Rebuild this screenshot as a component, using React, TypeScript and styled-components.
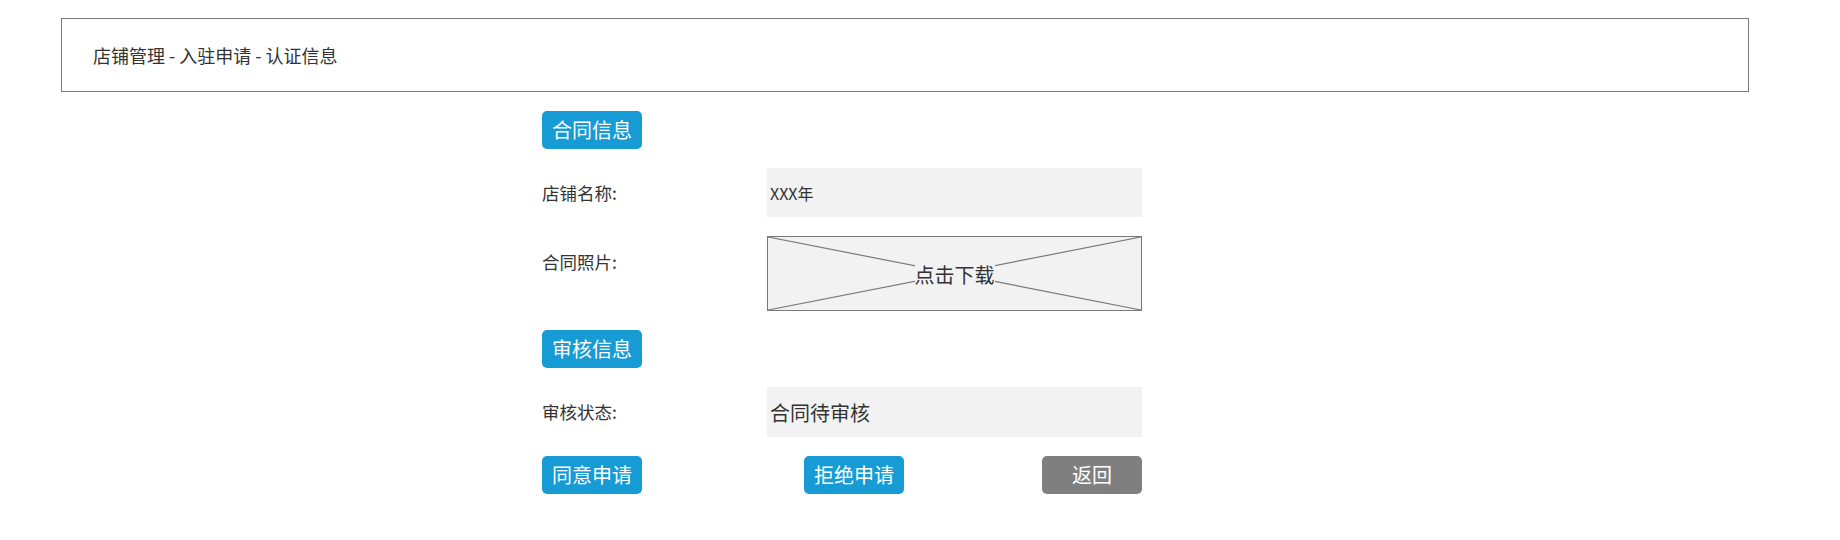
import React from 'react';
import styled, {createGlobalStyle} from 'styled-components';

const GlobalStyle = createGlobalStyle`
  * {
    box-sizing: border-box;
  }
  body {
    margin: 0;
    background: #fff;
    font-family: "Noto Sans CJK SC", "Liberation Sans", sans-serif;
    color: #333;
  }
`
const Page = styled.div`
  width: 1840px;
  padding: 18px 0 0 61px;
`
const Header = styled.div`
  width: 1688px;
  height: 74px;
  border: 1px solid #797979;
  display: flex;
  align-items: center;
  padding-left: 31px;
  font-size: 18px;
  color: #333;
`
const Content = styled.div`
  width: 601px;
  margin-left: 481px;
  margin-top: 19px;
  display: flex;
  flex-direction: column;
  gap: 19px;
`
const Button = styled.button<{ $gray?: boolean }>`
  display: block;
  width: 100px;
  height: 38px;
  border: none;
  border-radius: 5px;
  background: ${p => p.$gray ? '#7f7f7f' : '#169bd5'};
  color: #fff;
  font-family: inherit;
  font-size: 20px;
  line-height: 38px;
  padding: 0;
  cursor: pointer;
`
const Row = styled.div<{ $top?: boolean }>`
  display: grid;
  grid-template-columns: 225px 375px;
  align-items: ${p => p.$top ? 'start' : 'center'};
`
const Label = styled.div<{ $offset?: number }>`
  font-size: 17.5px;
  line-height: 24px;
  color: #333;
  padding-top: ${p => p.$offset || 0}px;
`
const Field = styled.div<{ $big?: boolean }>`
  height: ${p => p.$big ? 50 : 49}px;
  background: #f2f2f2;
  display: flex;
  align-items: center;
  padding-left: 3px;
  font-size: ${p => p.$big ? 20 : 16}px;
  color: #333;
`
const Placeholder = styled.div`
  position: relative;
  height: 75px;
  border: 1px solid #797979;
  background: #f2f2f2;
  display: flex;
  align-items: center;
  justify-content: center;
  cursor: pointer;
`
const Cross = styled.svg`
  position: absolute;
  inset: 0;
  width: 100%;
  height: 100%;
`
const PlaceholderText = styled.span`
  position: relative;
  background: #f2f2f2;
  font-size: 20px;
  line-height: 24px;
  margin-top: 3px;
  color: #333;
`
const Actions = styled.div`
  display: flex;
  align-items: center;
`
const Spacer = styled.div<{ $w?: number }>`
  width: ${p => p.$w}px;
`

const App = () => {
    return (
        <>
            <GlobalStyle/>
            <Page>
                <Header>店铺管理 - 入驻申请 - 认证信息</Header>
                <Content>
                    <div><Button type={'button'}>合同信息</Button></div>
                    <Row>
                        <Label>店铺名称:</Label>
                        <Field>XXX年</Field>
                    </Row>
                    <Row $top>
                        <Label $offset={14}>合同照片:</Label>
                        <Placeholder>
                            <Cross viewBox="0 0 373 73" preserveAspectRatio="none">
                                <line x1="0" y1="0" x2="373" y2="73" stroke="#797979" strokeWidth="1.2"/>
                                <line x1="373" y1="0" x2="0" y2="73" stroke="#797979" strokeWidth="1.2"/>
                            </Cross>
                            <PlaceholderText>点击下载</PlaceholderText>
                        </Placeholder>
                    </Row>
                    <div><Button type={'button'}>审核信息</Button></div>
                    <Row>
                        <Label>审核状态:</Label>
                        <Field $big>合同待审核</Field>
                    </Row>
                    <Actions>
                        <Button type={'button'}>同意申请</Button>
                        <Spacer $w={162}/>
                        <Button type={'button'}>拒绝申请</Button>
                        <Spacer $w={138}/>
                        <Button type={'button'} $gray>返回</Button>
                    </Actions>
                </Content>
            </Page>
        </>
    );
};

export default App;
